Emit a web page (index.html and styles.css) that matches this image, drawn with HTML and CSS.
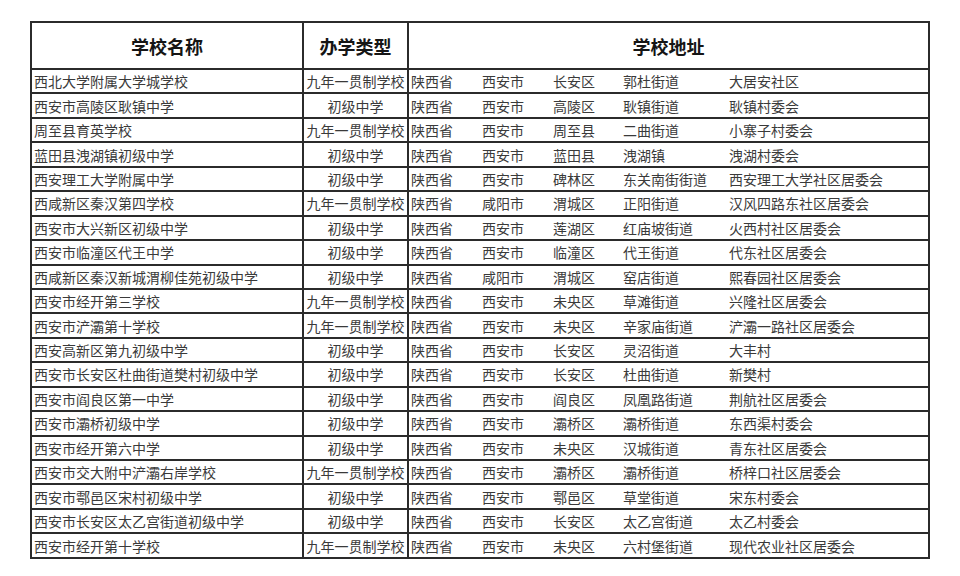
FILE: index.html
```html
<!DOCTYPE html>
<html lang="zh-CN">
<head>
<meta charset="utf-8">
<title>学校名单</title>
<link rel="stylesheet" href="styles.css">
</head>
<body>
<table class="schools">
  <colgroup>
    <col class="c-name">
    <col class="c-type">
    <col class="c-addr">
  </colgroup>
  <thead>
    <tr><th>学校名称</th><th>办学类型</th><th>学校地址</th></tr>
  </thead>
  <tbody>
    <tr><td class="name">西北大学附属大学城学校</td><td class="type">九年一贯制学校</td><td class="addr"><div class="parts"><span class="p1">陕西省</span><span class="p2">西安市</span><span class="p3">长安区</span><span class="p4">郭杜街道</span><span class="p5">大居安社区</span></div></td></tr>
    <tr><td class="name">西安市高陵区耿镇中学</td><td class="type">初级中学</td><td class="addr"><div class="parts"><span class="p1">陕西省</span><span class="p2">西安市</span><span class="p3">高陵区</span><span class="p4">耿镇街道</span><span class="p5">耿镇村委会</span></div></td></tr>
    <tr><td class="name">周至县育英学校</td><td class="type">九年一贯制学校</td><td class="addr"><div class="parts"><span class="p1">陕西省</span><span class="p2">西安市</span><span class="p3">周至县</span><span class="p4">二曲街道</span><span class="p5">小寨子村委会</span></div></td></tr>
    <tr><td class="name">蓝田县洩湖镇初级中学</td><td class="type">初级中学</td><td class="addr"><div class="parts"><span class="p1">陕西省</span><span class="p2">西安市</span><span class="p3">蓝田县</span><span class="p4">洩湖镇</span><span class="p5">洩湖村委会</span></div></td></tr>
    <tr><td class="name">西安理工大学附属中学</td><td class="type">初级中学</td><td class="addr"><div class="parts"><span class="p1">陕西省</span><span class="p2">西安市</span><span class="p3">碑林区</span><span class="p4">东关南街街道</span><span class="p5">西安理工大学社区居委会</span></div></td></tr>
    <tr><td class="name">西咸新区秦汉第四学校</td><td class="type">九年一贯制学校</td><td class="addr"><div class="parts"><span class="p1">陕西省</span><span class="p2">咸阳市</span><span class="p3">渭城区</span><span class="p4">正阳街道</span><span class="p5">汉风四路东社区居委会</span></div></td></tr>
    <tr><td class="name">西安市大兴新区初级中学</td><td class="type">初级中学</td><td class="addr"><div class="parts"><span class="p1">陕西省</span><span class="p2">西安市</span><span class="p3">莲湖区</span><span class="p4">红庙坡街道</span><span class="p5">火西村社区居委会</span></div></td></tr>
    <tr><td class="name">西安市临潼区代王中学</td><td class="type">初级中学</td><td class="addr"><div class="parts"><span class="p1">陕西省</span><span class="p2">西安市</span><span class="p3">临潼区</span><span class="p4">代王街道</span><span class="p5">代东社区居委会</span></div></td></tr>
    <tr><td class="name">西咸新区秦汉新城渭柳佳苑初级中学</td><td class="type">初级中学</td><td class="addr"><div class="parts"><span class="p1">陕西省</span><span class="p2">咸阳市</span><span class="p3">渭城区</span><span class="p4">窑店街道</span><span class="p5">熙春园社区居委会</span></div></td></tr>
    <tr><td class="name">西安市经开第三学校</td><td class="type">九年一贯制学校</td><td class="addr"><div class="parts"><span class="p1">陕西省</span><span class="p2">西安市</span><span class="p3">未央区</span><span class="p4">草滩街道</span><span class="p5">兴隆社区居委会</span></div></td></tr>
    <tr><td class="name">西安市浐灞第十学校</td><td class="type">九年一贯制学校</td><td class="addr"><div class="parts"><span class="p1">陕西省</span><span class="p2">西安市</span><span class="p3">未央区</span><span class="p4">辛家庙街道</span><span class="p5">浐灞一路社区居委会</span></div></td></tr>
    <tr><td class="name">西安高新区第九初级中学</td><td class="type">初级中学</td><td class="addr"><div class="parts"><span class="p1">陕西省</span><span class="p2">西安市</span><span class="p3">长安区</span><span class="p4">灵沼街道</span><span class="p5">大丰村</span></div></td></tr>
    <tr><td class="name">西安市长安区杜曲街道樊村初级中学</td><td class="type">初级中学</td><td class="addr"><div class="parts"><span class="p1">陕西省</span><span class="p2">西安市</span><span class="p3">长安区</span><span class="p4">杜曲街道</span><span class="p5">新樊村</span></div></td></tr>
    <tr><td class="name">西安市阎良区第一中学</td><td class="type">初级中学</td><td class="addr"><div class="parts"><span class="p1">陕西省</span><span class="p2">西安市</span><span class="p3">阎良区</span><span class="p4">凤凰路街道</span><span class="p5">荆航社区居委会</span></div></td></tr>
    <tr><td class="name">西安市灞桥初级中学</td><td class="type">初级中学</td><td class="addr"><div class="parts"><span class="p1">陕西省</span><span class="p2">西安市</span><span class="p3">灞桥区</span><span class="p4">灞桥街道</span><span class="p5">东西渠村委会</span></div></td></tr>
    <tr><td class="name">西安市经开第六中学</td><td class="type">初级中学</td><td class="addr"><div class="parts"><span class="p1">陕西省</span><span class="p2">西安市</span><span class="p3">未央区</span><span class="p4">汉城街道</span><span class="p5">青东社区居委会</span></div></td></tr>
    <tr><td class="name">西安市交大附中浐灞右岸学校</td><td class="type">九年一贯制学校</td><td class="addr"><div class="parts"><span class="p1">陕西省</span><span class="p2">西安市</span><span class="p3">灞桥区</span><span class="p4">灞桥街道</span><span class="p5">桥梓口社区居委会</span></div></td></tr>
    <tr><td class="name">西安市鄠邑区宋村初级中学</td><td class="type">初级中学</td><td class="addr"><div class="parts"><span class="p1">陕西省</span><span class="p2">西安市</span><span class="p3">鄠邑区</span><span class="p4">草堂街道</span><span class="p5">宋东村委会</span></div></td></tr>
    <tr><td class="name">西安市长安区太乙宫街道初级中学</td><td class="type">初级中学</td><td class="addr"><div class="parts"><span class="p1">陕西省</span><span class="p2">西安市</span><span class="p3">长安区</span><span class="p4">太乙宫街道</span><span class="p5">太乙村委会</span></div></td></tr>
    <tr><td class="name">西安市经开第十学校</td><td class="type">九年一贯制学校</td><td class="addr"><div class="parts"><span class="p1">陕西省</span><span class="p2">西安市</span><span class="p3">未央区</span><span class="p4">六村堡街道</span><span class="p5">现代农业社区居委会</span></div></td></tr>
  </tbody>
</table>
</body>
</html>
```
FILE: styles.css
```css
html, body {
  margin: 0;
  padding: 0;
  background: #ffffff;
}

body {
  padding: 21px 0 0 30px;
  font-family: "Noto Sans CJK SC", "Noto Sans", sans-serif;
}

.schools {
  border-collapse: separate;
  border-spacing: 0;
  table-layout: fixed;
  width: 900px;
  border-left: 2px solid #2b2b2b;
  border-top: 2px solid #2b2b2b;
}

.c-name { width: 272px; }
.c-type { width: 105px; }
.c-addr { width: 521px; }

.schools th,
.schools td {
  border-right: 2px solid #2b2b2b;
  border-bottom: 2px solid #2b2b2b;
  padding: 0;
  vertical-align: middle;
  white-space: nowrap;
  overflow: hidden;
}

.schools th {
  height: 45px;
  font-size: 18px;
  font-weight: 700;
  color: #151515;
  text-align: center;
  line-height: 24px;
}

.schools td {
  height: 22.45px;
  font-size: 14px;
  line-height: 20px;
  color: #3a3a3a;
}

.schools td.name {
  padding-left: 2px;
  text-align: left;
}

.schools td.type {
  text-align: center;
}

.schools td.addr {
  padding-left: 2px;
}

.parts {
  display: flex;
  align-items: center;
}

.parts span { flex: none; }
.p1 { width: 71px; }
.p2 { width: 71px; }
.p3 { width: 70px; }
.p4 { width: 106px; }
.p5 { width: auto; }
```
